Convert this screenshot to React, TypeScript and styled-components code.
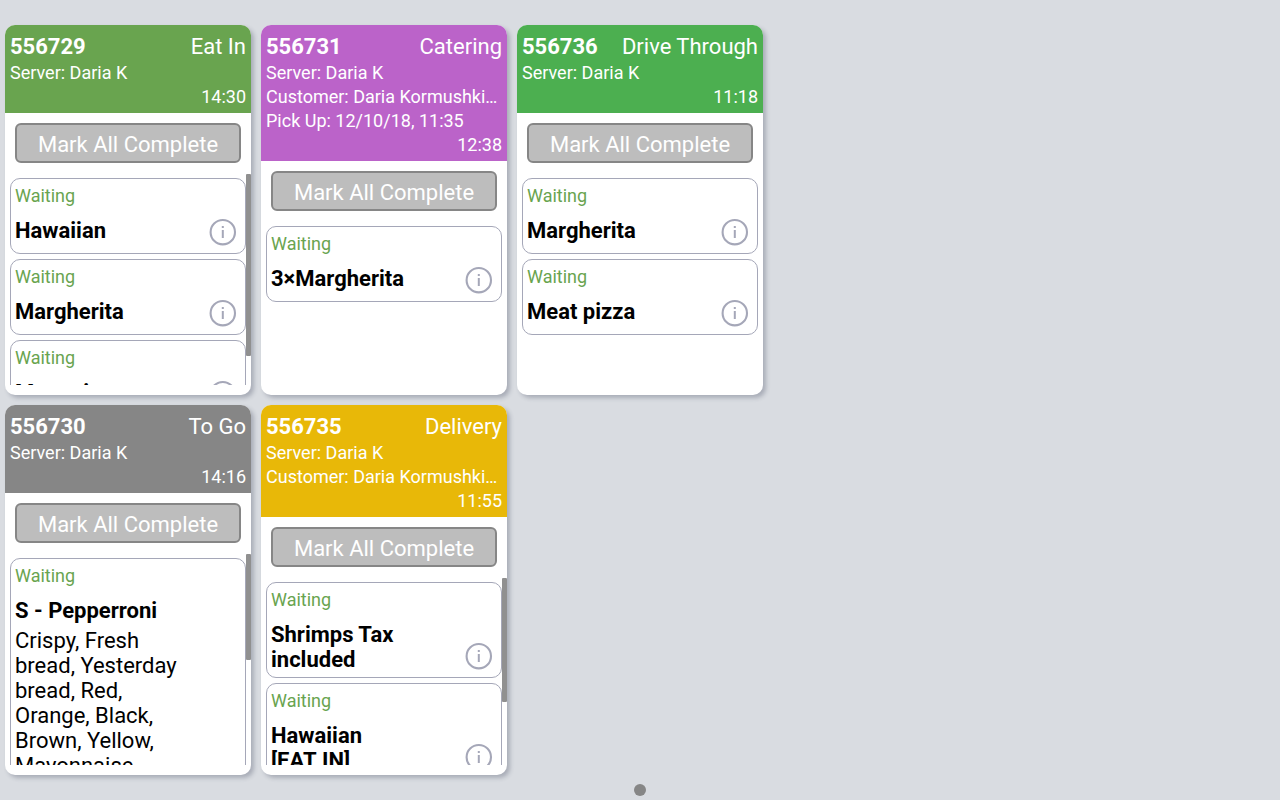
import React from "react";
import styled, { createGlobalStyle } from "styled-components";

const GlobalStyle = createGlobalStyle`
  *, *::before, *::after {
    box-sizing: border-box;
  }
  body {
    margin: 0;
    background: #d9dce1;
    color: #000;
    font-family: Roboto, "Liberation Sans", sans-serif;
  }
`;

interface OrderItem {
  name: string;
  modifiers?: string;
}

interface Order {
  id: string;
  type: string;
  color: string;
  details: string[];
  time: string;
  items: OrderItem[];
  /** share of the list that the scroll thumb covers, in percent */
  thumb?: number;
}

const orders: Order[] = [
  {
    id: "556729",
    type: "Eat In",
    color: "#69a44f",
    details: ["Server: Daria K"],
    time: "14:30",
    items: [{ name: "Hawaiian" }, { name: "Margherita" }, { name: "Meat pizza" }],
    thumb: 86,
  },
  {
    id: "556730",
    type: "To Go",
    color: "#868686",
    details: ["Server: Daria K"],
    time: "14:16",
    items: [
      {
        name: "S - Pepperroni",
        modifiers:
          "Crispy, Fresh bread, Yesterday bread, Red, Orange, Black, Brown, Yellow, Mayonnaise",
      },
    ],
    thumb: 50,
  },
  {
    id: "556731",
    type: "Catering",
    color: "#bb63c9",
    details: [
      "Server: Daria K",
      "Customer: Daria Kormushkina",
      "Pick Up: 12/10/18, 11:35",
    ],
    time: "12:38",
    items: [{ name: "3×Margherita" }],
  },
  {
    id: "556735",
    type: "Delivery",
    color: "#e8b808",
    details: ["Server: Daria K", "Customer: Daria Kormushkina"],
    time: "11:55",
    items: [{ name: "Shrimps Tax included" }, { name: "Hawaiian [EAT\u00a0IN]" }],
    thumb: 66,
  },
  {
    id: "556736",
    type: "Drive Through",
    color: "#4caf50",
    details: ["Server: Daria K"],
    time: "11:18",
    items: [{ name: "Margherita" }, { name: "Meat pizza" }],
  },
];

const Page = styled.main`
  display: flex;
  flex-direction: column;
  height: 100vh;
  padding-top: 25px;
`;

const Board = styled.div`
  flex: 1;
  min-height: 0;
  display: grid;
  grid-template-rows: repeat(2, minmax(0, 1fr));
  grid-auto-flow: column;
  grid-auto-columns: calc((100% - 40px) / 5);
  gap: 10px;
  padding: 0 5px;
`;

const Card = styled.article`
  display: flex;
  flex-direction: column;
  min-width: 0;
  padding-bottom: 10px;
  overflow: hidden;
  background: #fff;
  border-radius: 10px;
  box-shadow: 3px 3px 4px rgba(60, 65, 90, 0.3);
`;

const CardHeader = styled.header<{ $color: string }>`
  padding: 5px 5px 4px;
  background: ${(p) => p.$color};
  color: #fff;
  font-size: 18px;
  line-height: 24px;
`;

const TitleRow = styled.div`
  display: flex;
  justify-content: space-between;
  padding-top: 2px;
  font-size: 22px;
  line-height: 29px;
  white-space: nowrap;
`;

const OrderNumber = styled.h2`
  margin: 0;
  font-size: inherit;
  font-weight: 700;
`;

const Detail = styled.div`
  overflow: hidden;
  text-overflow: ellipsis;
  white-space: nowrap;
`;

const Time = styled.div`
  text-align: right;
`;

const CompleteButton = styled.button`
  flex: none;
  height: 40px;
  margin: 10px;
  padding: 3px 0 0;
  background: #bdbdbd;
  border: 2px solid #868686;
  border-radius: 6px;
  color: #fff;
  font-family: inherit;
  font-size: 22px;
  line-height: 33px;
`;

const ListFrame = styled.div`
  position: relative;
  flex: 1;
  min-height: 0;
  overflow: hidden;
`;

const ItemList = styled.ul`
  display: flex;
  flex-direction: column;
  gap: 5px;
  margin: 0;
  padding: 5px;
  list-style: none;
`;

const ScrollThumb = styled.div<{ $size: number }>`
  position: absolute;
  top: 1px;
  right: 0;
  width: 5px;
  height: ${(p) => p.$size}%;
  background: #909090;
  border-radius: 1px;
`;

const Item = styled.li`
  padding: 5px 8px 5px 4px;
  border: 1px solid #a5a7b8;
  border-radius: 10px;
`;

const Status = styled.div`
  margin-bottom: 10px;
  color: #69a44f;
  font-size: 18px;
  line-height: 24px;
`;

const ItemBody = styled.div`
  display: flex;
  align-items: flex-end;
  min-height: 30px;
`;

const ItemText = styled.div`
  flex: 1;
  align-self: flex-start;
  padding-right: 20px;
  font-size: 22px;
  line-height: 25px;
`;

const ItemName = styled.h3`
  margin: 0;
  font-size: inherit;
  font-weight: 700;
`;

const Modifiers = styled.p`
  margin: 5px 0 25px;
`;

const InfoButton = styled.button`
  flex: none;
  display: flex;
  margin-bottom: 2px;
  padding: 0;
  background: none;
  border: 0;
  color: #a5a7b8;
`;

const Pager = styled.nav`
  display: flex;
  justify-content: center;
  padding: 9px 0 4px;
`;

const PageDot = styled.button`
  width: 12px;
  height: 12px;
  padding: 0;
  background: #868686;
  border: 0;
  border-radius: 50%;
`;

const InfoIcon = () => (
  <svg width="28" height="28" viewBox="0 0 28 28" fill="none" aria-hidden="true">
    <circle cx="13.8" cy="14.2" r="12.2" stroke="currentColor" strokeWidth="2.1" />
    <rect x="12.8" y="8" width="2" height="2" fill="currentColor" />
    <rect x="12.8" y="12" width="2" height="8" fill="currentColor" />
  </svg>
);

const OrderCard = ({ order }: { order: Order }) => (
  <Card>
    <CardHeader $color={order.color}>
      <TitleRow>
        <OrderNumber>{order.id}</OrderNumber>
        <span>{order.type}</span>
      </TitleRow>
      {order.details.map((line) => (
        <Detail key={line}>{line}</Detail>
      ))}
      <Time>{order.time}</Time>
    </CardHeader>
    <CompleteButton type="button">Mark All Complete</CompleteButton>
    <ListFrame>
      <ItemList>
        {order.items.map((item, index) => (
          <Item key={index}>
            <Status>Waiting</Status>
            <ItemBody>
              <ItemText>
                <ItemName>{item.name}</ItemName>
                {item.modifiers && <Modifiers>{item.modifiers}</Modifiers>}
              </ItemText>
              <InfoButton type="button" aria-label={`About ${item.name}`}>
                <InfoIcon />
              </InfoButton>
            </ItemBody>
          </Item>
        ))}
      </ItemList>
      {order.thumb && <ScrollThumb $size={order.thumb} />}
    </ListFrame>
  </Card>
);

export default function App() {
  return (
    <>
      <GlobalStyle />
      <Page>
        <Board>
          {orders.map((order) => (
            <OrderCard key={order.id} order={order} />
          ))}
        </Board>
        <Pager aria-label="Pages">
          <PageDot type="button" aria-label="Page 1" />
        </Pager>
      </Page>
    </>
  );
}
